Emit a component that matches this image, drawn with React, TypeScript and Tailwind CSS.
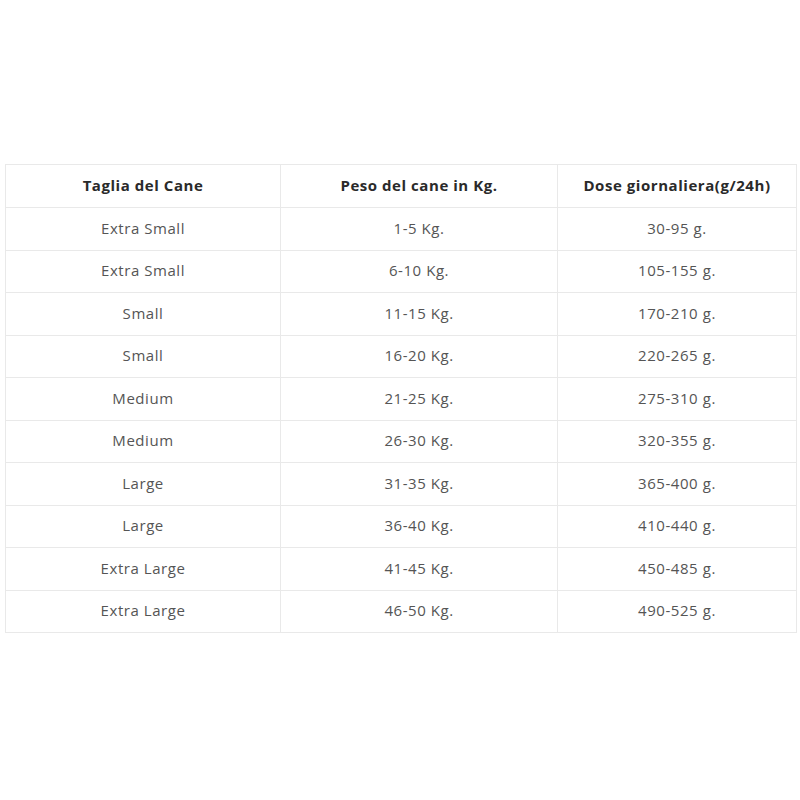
import * as React from 'react';

const rows = [
  ['Extra Small', '1-5 Kg.', '30-95 g.'],
  ['Extra Small', '6-10 Kg.', '105-155 g.'],
  ['Small', '11-15 Kg.', '170-210 g.'],
  ['Small', '16-20 Kg.', '220-265 g.'],
  ['Medium', '21-25 Kg.', '275-310 g.'],
  ['Medium', '26-30 Kg.', '320-355 g.'],
  ['Large', '31-35 Kg.', '365-400 g.'],
  ['Large', '36-40 Kg.', '410-440 g.'],
  ['Extra Large', '41-45 Kg.', '450-485 g.'],
  ['Extra Large', '46-50 Kg.', '490-525 g.'],
];

const headers = ['Taglia del Cane', 'Peso del cane in Kg.', 'Dose giornaliera(g/24h)'];

export default function App() {
  return (
    <div className="w-[800px] h-[800px] bg-white pt-[164px] pl-[5px] font-['Open_Sans',sans-serif] tracking-[0.55px]">
      <table className="w-[791px] border-collapse table-fixed">
        <colgroup>
          <col className="w-[275px]" />
          <col className="w-[277px]" />
          <col className="w-[239px]" />
        </colgroup>
        <thead>
          <tr className="h-[43px]">
            {headers.map(h => (
              <th key={h} className="border border-[#e9e9e9] text-center text-[15px] font-bold text-[#2a2a2a] p-0 pb-[2px]">
                {h}
              </th>
            ))}
          </tr>
        </thead>
        <tbody>
          {rows.map((r, i) => (
            <tr key={i} className="h-[42.5px]">
              {r.map((c, j) => (
                <td key={j} className="border border-[#e9e9e9] text-center text-[15px] text-[#555] p-0 pb-[2px]">
                  {c}
                </td>
              ))}
            </tr>
          ))}
        </tbody>
      </table>
    </div>
  );
}
